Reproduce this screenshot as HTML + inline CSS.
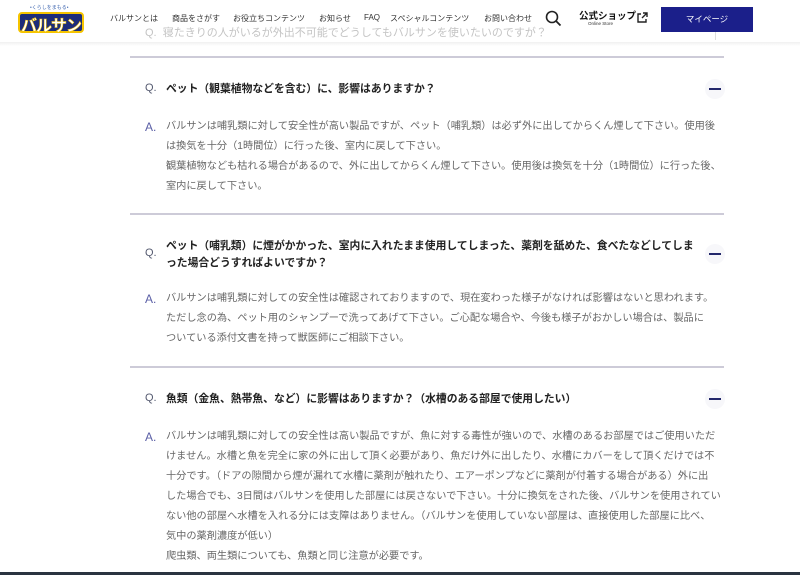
<!DOCTYPE html>
<html><head><meta charset="utf-8"><style>
*{margin:0;padding:0;box-sizing:border-box}
body{width:800px;height:575px;overflow:hidden;background:#fff;font-family:"Liberation Sans","Noto Sans CJK JP",sans-serif;position:relative}
.abs{position:absolute;white-space:nowrap}
header{position:absolute;left:0;top:0;width:800px;height:42px;background:rgba(255,255,255,0.93);z-index:2}
.nav{font-size:8px;color:#333;top:13px}
.sep{position:absolute;left:130px;width:594px;height:2px;background:#cdcbd8}
.q{font-size:10.8px;font-weight:bold;color:#222;line-height:17px}
.ql{font-size:11px;color:#555a70}
.al{font-size:12px;color:#5b5fa6}
.a{font-size:10.2px;color:#666;line-height:20px;left:166px}
.minus{position:absolute;left:705px;width:20px;height:20px;border-radius:50%;background:#f7f7fa}
.minus:after{content:"";position:absolute;left:4px;top:9px;width:12px;height:2px;background:#23286b}
</style></head><body>
<header>
 <div class="abs" style="left:30px;top:4px;font-size:5px;color:#4a6fb5">•くらしをまもる•</div>
 <div class="abs" style="left:18px;top:12px;width:66px;height:21px;background:#1c2c7a;border-radius:4px;border:2px solid #f5c400"></div>
 <div class="abs" style="left:21px;top:12px;font-size:16px;font-weight:bold;color:#fff;letter-spacing:-1px;-webkit-text-stroke:0.5px #f5c400">バルサン</div>
 <div class="abs nav" style="left:110px">バルサンとは</div>
 <div class="abs nav" style="left:172px">商品をさがす</div>
 <div class="abs nav" style="left:233px">お役立ちコンテンツ</div>
 <div class="abs nav" style="left:319px">お知らせ</div>
 <div class="abs nav" style="left:364px">FAQ</div>
 <div class="abs nav" style="left:390px">スペシャルコンテンツ</div>
 <div class="abs nav" style="left:484px">お問い合わせ</div>
 <svg class="abs" style="left:545px;top:10px" width="17" height="17" viewBox="0 0 17 17"><circle cx="7" cy="7" r="5.5" fill="none" stroke="#222" stroke-width="1.6"/><line x1="11" y1="11" x2="15.5" y2="15.5" stroke="#222" stroke-width="1.8"/></svg>
 <div class="abs" style="left:579px;top:8px;font-size:9.5px;font-weight:bold;color:#111">公式ショップ</div>
 <div class="abs" style="left:588px;top:21px;font-size:4.5px;color:#333">Online Store</div>
 <svg class="abs" style="left:636px;top:12px" width="12" height="12" viewBox="0 0 12 12"><path d="M5 2H2v8h8V7" fill="none" stroke="#222" stroke-width="1.4"/><path d="M6 6L11 1M7 1h4v4" fill="none" stroke="#222" stroke-width="1.4"/></svg>
 <div class="abs" style="left:661px;top:7px;width:92px;height:25px;background:#1b1f8a;color:#fff;font-size:8.5px;text-align:center;line-height:25px">マイページ</div>
</header>
<div class="abs" style="left:145px;top:24px;font-size:11px;color:#c4c4c4;z-index:3">Q.&nbsp;&nbsp;寝たきりの人がいるが外出不可能でどうしてもバルサンを使いたいのですが？</div>
<div class="abs" style="left:715px;top:32px;width:1px;height:8px;background:#ddd;z-index:3"></div>
<div class="abs" style="left:0;top:42px;width:800px;height:4px;background:linear-gradient(#f0f0f0,#fff)"></div>

<div class="sep" style="top:56px"></div>
<div class="abs ql" style="left:145px;top:82px">Q.</div>
<div class="abs q" style="left:166px;top:81px">ペット（観葉植物などを含む）に、影響はありますか？</div>
<div class="minus" style="top:79px"></div>
<div class="abs al" style="left:145px;top:120px">A.</div>
<div class="abs a" style="top:117px">バルサンは哺乳類に対して安全性が高い製品ですが、ペット（哺乳類）は必ず外に出してからくん煙して下さい。使用後<br>は換気を十分（1時間位）に行った後、室内に戻して下さい。<br>観葉植物なども枯れる場合があるので、外に出してからくん煙して下さい。使用後は換気を十分（1時間位）に行った後、<br>室内に戻して下さい。</div>

<div class="sep" style="top:213px"></div>
<div class="abs ql" style="left:145px;top:247px">Q.</div>
<div class="abs q" style="left:166px;top:238px">ペット（哺乳類）に煙がかかった、室内に入れたまま使用してしまった、薬剤を舐めた、食べたなどしてしま<br>った場合どうすればよいですか？</div>
<div class="minus" style="top:244px"></div>
<div class="abs al" style="left:145px;top:292px">A.</div>
<div class="abs a" style="top:289px">バルサンは哺乳類に対しての安全性は確認されておりますので、現在変わった様子がなければ影響はないと思われます。<br>ただし念の為、ペット用のシャンプーで洗ってあげて下さい。ご心配な場合や、今後も様子がおかしい場合は、製品に<br>ついている添付文書を持って獣医師にご相談下さい。</div>

<div class="sep" style="top:366px"></div>
<div class="abs ql" style="left:145px;top:392px">Q.</div>
<div class="abs q" style="left:166px;top:391px">魚類（金魚、熱帯魚、など）に影響はありますか？（水槽のある部屋で使用したい）</div>
<div class="minus" style="top:389px"></div>
<div class="abs al" style="left:145px;top:430px">A.</div>
<div class="abs a" style="top:427px">バルサンは哺乳類に対しての安全性は高い製品ですが、魚に対する毒性が強いので、水槽のあるお部屋ではご使用いただ<br>けません。水槽と魚を完全に家の外に出して頂く必要があり、魚だけ外に出したり、水槽にカバーをして頂くだけでは不<br>十分です。（ドアの隙間から煙が漏れて水槽に薬剤が触れたり、エアーポンプなどに薬剤が付着する場合がある）外に出<br>した場合でも、3日間はバルサンを使用した部屋には戻さないで下さい。十分に換気をされた後、バルサンを使用されてい<br>ない他の部屋へ水槽を入れる分には支障はありません。（バルサンを使用していない部屋は、直接使用した部屋に比べ、<br>気中の薬剤濃度が低い）<br>爬虫類、両生類についても、魚類と同じ注意が必要です。</div>
<div class="abs" style="left:0;top:572px;width:800px;height:3px;background:#2a3440"></div>
</body></html>
